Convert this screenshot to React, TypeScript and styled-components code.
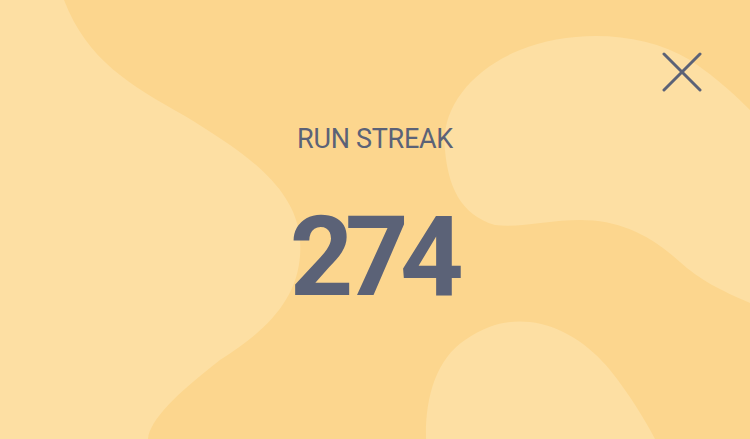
import React from "react";
import styled, { createGlobalStyle } from "styled-components";

const Global = createGlobalStyle`
  html, body { margin: 0; padding: 0; }
  body { background: #fcd68e; overflow: hidden; }
`;

const Screen = styled.div`
  position: relative;
  width: 750px;
  height: 439px;
  overflow: hidden;
  background: #fcd68e;
  font-family: Roboto, "Liberation Sans", sans-serif;
  color: #5b6277;
`;

const Backdrop = styled.svg`
  position: absolute;
  inset: 0;
  width: 100%;
  height: 100%;
`;

const Content = styled.main`
  position: relative;
  display: flex;
  flex-direction: column;
  align-items: center;
  padding-top: 126px;
  gap: 49px;
`;

const Label = styled.h2`
  margin: 0;
  font-size: 27px;
  line-height: 1;
  font-weight: 400;
  letter-spacing: -0.3px;
`;

const Count = styled.div`
  font-size: 111px;
  line-height: 1;
  font-weight: 700;
  letter-spacing: -8.5px;
  padding-right: 5px;
`;

const Close = styled.button`
  position: absolute;
  top: 52px;
  right: 48px;
  width: 40px;
  height: 40px;
  padding: 0;
  border: 0;
  background: transparent;
  cursor: pointer;
  svg { display: block; }
`;

export default function App() {
  return (
    <Screen>
      <Global />
      <Backdrop viewBox="0 0 750 439" preserveAspectRatio="none">
        <g fill="#fddfa3">
          <path d="M0 0 H64 C87 60 130 85 185 116 C240 150 296 185 300 240 C304 295 268 330 220 360 C175 395 150 420 148 439 H0 Z" />
          <path d="M445 150 C440 110 470 70 520 50 C570 30 640 30 690 60 C720 80 740 100 750 110 V303 C720 290 700 280 680 262 C650 235 620 220 580 220 C550 220 520 228 495 225 C460 215 448 185 445 150 Z" />
          <path d="M426 439 C425 400 435 360 465 340 C490 323 510 320 530 322 C560 325 590 345 610 370 C630 395 645 420 655 439 Z" />
        </g>
      </Backdrop>
      <Content>
        <Label>RUN STREAK</Label>
        <Count>274</Count>
      </Content>
      <Close aria-label="Close">
        <svg width="40" height="40" viewBox="0 0 40 40">
          <g stroke="#5b6277" strokeWidth="3" strokeLinecap="round">
            <line x1="2" y1="2" x2="38" y2="38" />
            <line x1="38" y1="2" x2="2" y2="38" />
          </g>
        </svg>
      </Close>
    </Screen>
  );
}
